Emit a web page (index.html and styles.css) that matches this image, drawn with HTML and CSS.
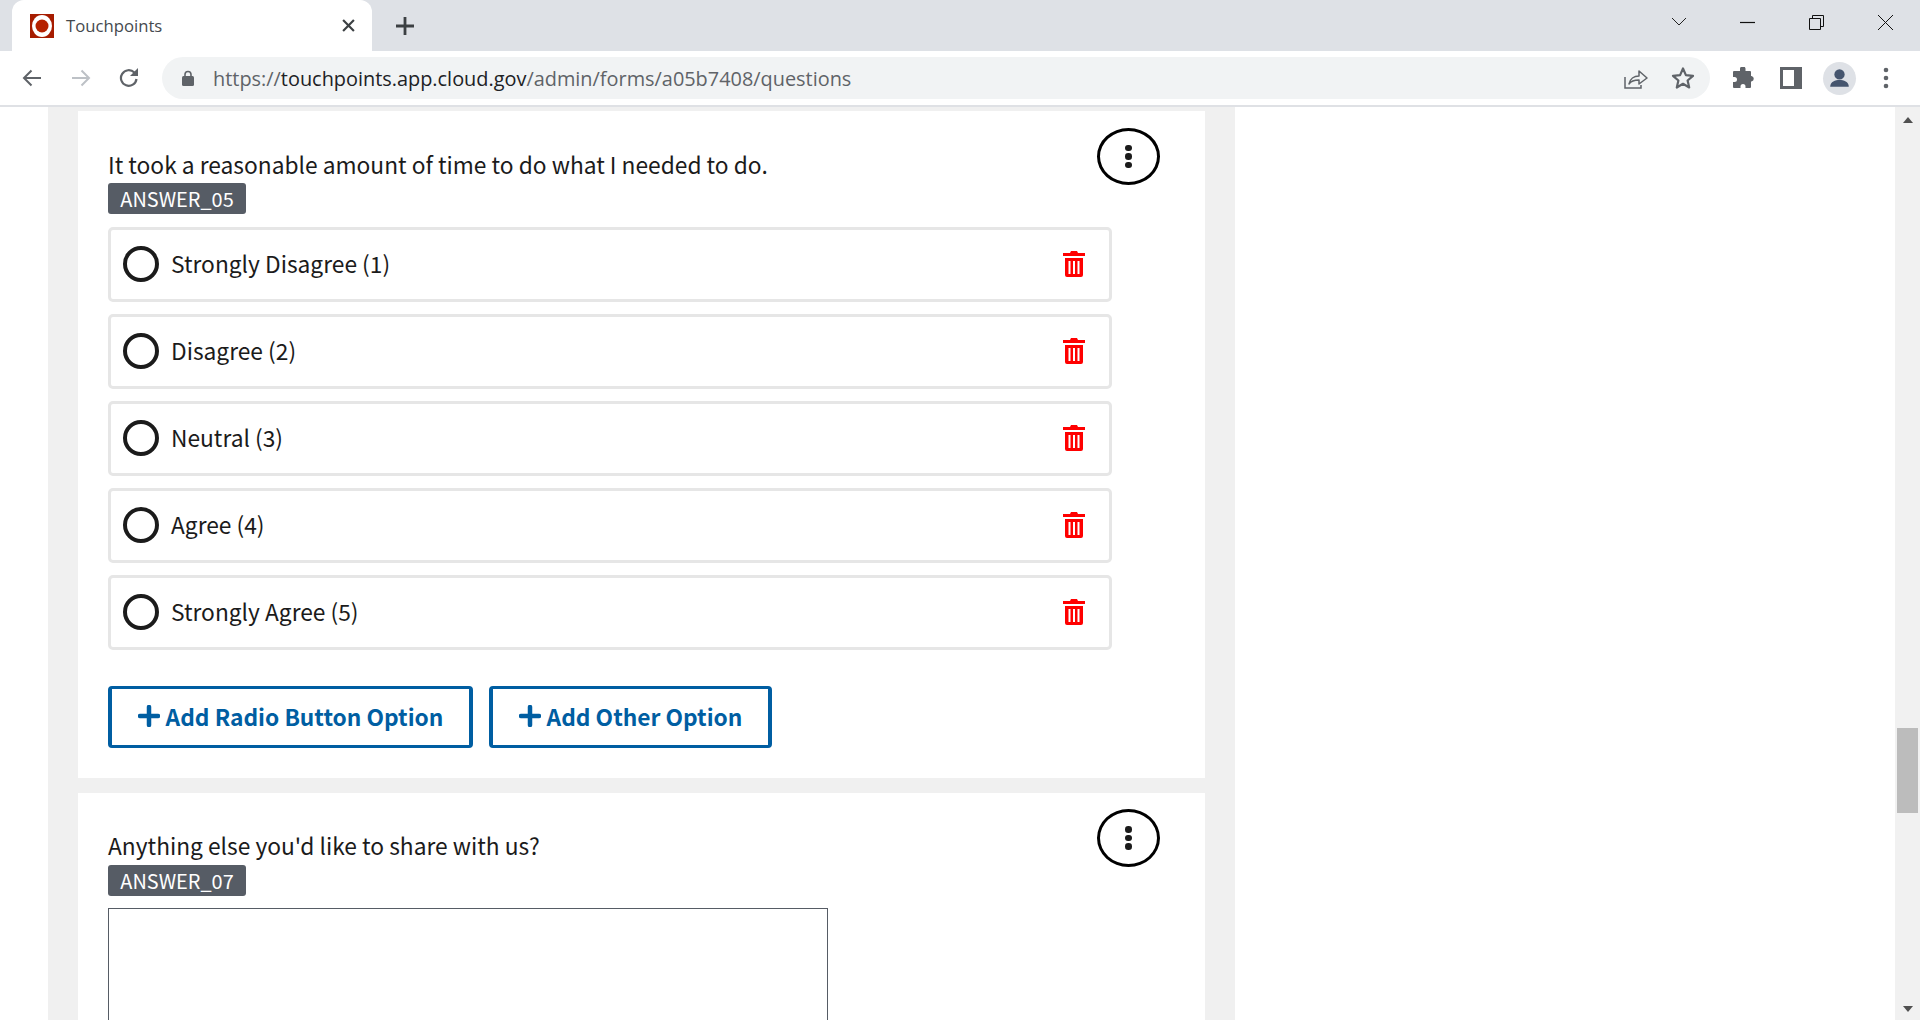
FILE: index.html
```html
<!DOCTYPE html>
<html lang="en">
<head>
<meta charset="utf-8">
<title>Touchpoints</title>
<link rel="stylesheet" href="styles.css">
</head>
<body>
<svg class="defs" width="0" height="0" aria-hidden="true">
  <symbol id="trash" viewBox="0 0 22 26">
    <path fill="#f00" d="M8 0h6l1 2h7v3H0V2h7z"/>
    <path fill="#f00" fill-rule="evenodd" d="M2 7h18v17a2 2 0 0 1-2 2H4a2 2 0 0 1-2-2zM5.500 10v13h2V10zM10 10v13h2V10zM14.500 10v13h2V10z"/>
  </symbol>
</svg>
<header class="chrome">
  <div class="tabstrip">
    <div class="tab">
      <svg class="favicon" viewBox="0 0 24 24"><rect width="24" height="24" fill="#a61c00"/><ellipse cx="12" cy="12" rx="10" ry="11" fill="#fff"/><circle cx="12" cy="12" r="6.500" fill="#b52100"/></svg>
      <span class="tab-title">Touchpoints</span>
      <svg class="tab-close" viewBox="0 0 12 12"><path d="M1 1l10 10M11 1L1 11" stroke="#3c4043" stroke-width="2"/></svg>
    </div>
    <svg class="new-tab" viewBox="0 0 18 18"><path d="M9 0v18M0 9h18" stroke="#3c4043" stroke-width="2.800"/></svg>
    <div class="window-controls">
      <svg class="win chevron" viewBox="0 0 16 10"><path d="M1 1l7 7 7-7" fill="none" stroke="#222" stroke-width="1"/></svg>
      <svg class="win minimize" viewBox="0 0 15 15"><path d="M0 7.500h15" stroke="#111" stroke-width="1.200"/></svg>
      <svg class="win restore" viewBox="0 0 15 15"><path d="M.5 3.500h11v11H.5zM3.500 3.500V.5h11v11h-3" fill="none" stroke="#111" stroke-width="1"/></svg>
      <svg class="win close" viewBox="0 0 15 15"><path d="M0 0l15 15M15 0L0 15" stroke="#111" stroke-width="1"/></svg>
    </div>
  </div>
  <div class="toolbar">
    <svg class="nav back" viewBox="0 0 20 18"><path d="M19 9H2M9.500 1.500L2 9l7.500 7.500" fill="none" stroke="#5f6368" stroke-width="2"/></svg>
    <svg class="nav forward" viewBox="0 0 20 18"><path d="M1 9h17M10.500 1.500L18 9l-7.500 7.500" fill="none" stroke="#bdc1c6" stroke-width="2"/></svg>
    <svg class="nav reload" viewBox="0 0 20 20"><path d="M17.500 11a7.800 7.800 0 1 1-2.200-6.500" fill="none" stroke="#5f6368" stroke-width="2.200"/><path d="M19 0v8h-8z" fill="#5f6368"/></svg>
    <div class="omnibox">
      <svg class="lock" viewBox="0 0 12 16"><path d="M3 7V4.500a3 3 0 0 1 6 0V7" fill="none" stroke="#5f6368" stroke-width="1.600"/><rect y="6" width="12" height="10" rx="1.500" fill="#5f6368"/></svg>
      <div class="url">https://<span class="host">touchpoints.app.cloud.gov</span>/admin/forms/a05b7408/questions</div>
      <svg class="omni-icon share" viewBox="0 0 24 21"><path d="M1 9v11h16v-3" fill="none" stroke="#5f6368" stroke-width="1.500"/><path d="M5 16c1-5 5-8 10-8V3l8 7-8 6v-4c-4 0-8 1-10 4z" fill="none" stroke="#5f6368" stroke-width="1.500" stroke-linejoin="round"/></svg>
      <svg class="omni-icon star" viewBox="0 0 24 24"><path d="M12 2.500l2.900 6.600 7.100.7-5.400 4.700 1.600 7-6.200-3.700-6.200 3.700 1.600-7L2 9.800l7.100-.7z" fill="none" stroke="#5f6368" stroke-width="2.200" stroke-linejoin="round"/></svg>
    </div>
    <svg class="tool puzzle" viewBox="0 0 22 22"><path fill="#5f6368" d="M8 1.500a2.800 2.800 0 0 1 5.500 0V4H18a1 1 0 0 1 1 1v4h.5a2.800 2.800 0 0 1 0 5.500H19V20a1 1 0 0 1-1 1h-4.500v-1.500a2.500 2.500 0 0 0-5 0V21H2a1 1 0 0 1-1-1v-5h1.500a2.500 2.500 0 0 0 0-5H1V5a1 1 0 0 1 1-1h6z"/></svg>
    <svg class="tool panel" viewBox="0 0 22 22"><path fill="#5f6368" fill-rule="evenodd" d="M0 0h22v22H0zM3 3v16h11V3z"/></svg>
    <div class="avatar"><svg viewBox="0 0 32 32"><circle cx="16" cy="12" r="5" fill="#45556e"/><path d="M7 24c0-5 5-6.500 9-6.500s9 1.500 9 6.500z" fill="#45556e"/></svg></div>
    <svg class="tool kebab-menu" viewBox="0 0 6 22"><circle cx="3" cy="3" r="2.300" fill="#5f6368"/><circle cx="3" cy="11" r="2.300" fill="#5f6368"/><circle cx="3" cy="19" r="2.300" fill="#5f6368"/></svg>
  </div>
</header>
<div class="viewport">
  <main class="page">
    <section class="card">
      <div class="question-head">
        <div class="question-text">
          <h2 class="question">It took a reasonable amount of time to do what I needed to do.</h2>
          <span class="badge">ANSWER_05</span>
        </div>
        <button class="menu-btn" type="button" aria-label="Menu"><i></i><i></i><i></i></button>
      </div>
      <ul class="options">
        <li class="option"><span class="radio"></span><span class="option-label">Strongly Disagree (1)</span><svg class="trash"><use href="#trash"/></svg></li>
        <li class="option"><span class="radio"></span><span class="option-label">Disagree (2)</span><svg class="trash"><use href="#trash"/></svg></li>
        <li class="option"><span class="radio"></span><span class="option-label">Neutral (3)</span><svg class="trash"><use href="#trash"/></svg></li>
        <li class="option"><span class="radio"></span><span class="option-label">Agree (4)</span><svg class="trash"><use href="#trash"/></svg></li>
        <li class="option"><span class="radio"></span><span class="option-label">Strongly Agree (5)</span><svg class="trash"><use href="#trash"/></svg></li>
      </ul>
      <div class="actions">
        <button class="add-btn add-radio" type="button"><svg class="plus" viewBox="0 0 22 22"><path d="M11 2v18M2 11h18" stroke="#005ea2" stroke-width="4.500" stroke-linecap="round"/></svg>Add Radio Button Option</button>
        <button class="add-btn add-other" type="button"><svg class="plus" viewBox="0 0 22 22"><path d="M11 2v18M2 11h18" stroke="#005ea2" stroke-width="4.500" stroke-linecap="round"/></svg>Add Other Option</button>
      </div>
    </section>
    <section class="card">
      <div class="question-head">
        <div class="question-text">
          <h2 class="question">Anything else you'd like to share with us?</h2>
          <span class="badge">ANSWER_07</span>
        </div>
        <button class="menu-btn" type="button" aria-label="Menu"><i></i><i></i><i></i></button>
      </div>
      <div class="textarea"></div>
    </section>
  </main>
  <div class="scrollbar">
    <span class="arrow up"></span>
    <div class="track"><div class="thumb"></div></div>
    <span class="arrow down"></span>
  </div>
</div>
</body>
</html>
```
FILE: styles.css
```css
* { box-sizing: border-box; }
html, body { margin: 0; height: 100%; }
body {
  display: flex;
  flex-direction: column;
  height: 1020px;
  overflow: hidden;
  background: #fff;
  color: #1b1b1b;
  font-family: "Noto Sans CJK SC", "Noto Sans", sans-serif;
}
.defs { position: absolute; }

/* browser chrome */
.chrome { flex: none; font-family: "Open Sans", "Noto Sans", sans-serif; }
.tabstrip { display: flex; align-items: center; height: 51px; background: #dee1e6; padding-left: 12px; }
.tab {
  display: flex; align-items: center; align-self: stretch;
  width: 360px; padding: 0 17px 0 18px;
  background: #fff; border-radius: 12px 12px 0 0;
}
.favicon { width: 24px; height: 24px; flex: none; }
.tab-title { margin-left: 12px; font-size: 16.700px; color: #45494e; flex: 1; }
.tab-close { width: 13px; height: 13px; flex: none; }
.new-tab { width: 18px; height: 18px; margin-left: 24px; flex: none; }
.window-controls { display: flex; align-items: center; margin-left: auto; height: 100%; padding-bottom: 7px; }
.win { flex: none; }
.chevron { width: 16px; height: 10px; margin-right: 53px; }
.minimize { width: 15px; height: 15px; margin-right: 54px; }
.restore { width: 15px; height: 15px; margin-right: 54px; }
.close { width: 15px; height: 15px; margin-right: 27px; }

.toolbar {
  display: flex; align-items: center;
  height: 56px; padding: 0 0 0 22px;
  background: #fff; border-bottom: 2px solid #dfe1e5;
}
.nav { flex: none; width: 20px; height: 20px; }
.forward { margin-left: 29px; }
.reload { margin-left: 28px; }
.omnibox {
  display: flex; align-items: center;
  width: 1548px; height: 42px; margin-left: 23px;
  padding: 0 15px 0 20px;
  background: #f1f3f4; border-radius: 21px;
}
.lock { width: 12px; height: 16px; flex: none; }
.url { margin-left: 19px; flex: 1; font-size: 19.900px; color: #5f6368; white-space: nowrap; }
.host { color: #202124; }
.omni-icon { flex: none; }
.share { width: 24px; height: 21px; margin-right: 23px; }
.star { width: 24px; height: 24px; }
.tool { flex: none; }
.puzzle { width: 22px; height: 22px; margin-left: 22px; }
.panel { width: 22px; height: 22px; margin-left: 26px; }
.avatar { width: 33px; height: 33px; margin-left: 21px; border-radius: 50%; background: #dee1e6; flex: none; }
.avatar svg { display: block; width: 100%; height: 100%; }
.kebab-menu { width: 6px; height: 22px; margin-left: 27px; }

/* page */
.viewport { flex: 1; min-height: 0; display: flex; overflow: hidden; }
.page {
  flex: none; align-self: flex-start;
  width: 1187px; margin-left: 48px;
  padding: 4px 30px 0;
  background: #f0f0f0;
  height: 913px; overflow: hidden;
}
.card { background: #fff; padding: 0 30px 30px; margin-bottom: 15px; }
.question-head { display: flex; justify-content: space-between; align-items: flex-start; }
.question-text { padding-top: 34px; }
.question { margin: 0; font-size: 22.750px; line-height: 38px; font-weight: 400; color: #1b1b1b; }
.card:first-child .question-text { padding-top: 36px; }
.card:first-child .question { line-height: 36px; }
.badge {
  display: block; width: 138px; height: 31px;
  background: #565c65; color: #fff; border-radius: 3px;
  font-size: 19.900px; line-height: 32px; text-align: center;
}
.menu-btn {
  flex: none; width: 63px; height: 57px; margin: 17px 15px 0 0;
  display: flex; flex-direction: column; align-items: center; justify-content: center; gap: 2px;
  padding: 0; background: #fff; border: 3px solid #000; border-radius: 50%;
}
.card + .card .menu-btn { height: 58px; margin-top: 16px; }
.menu-btn i { display: block; width: 6.500px; height: 6.500px; border-radius: 50%; background: #1b1b1b; }

.options { list-style: none; margin: 13px 0 0; padding: 0; width: 1004px; display: flex; flex-direction: column; gap: 12px; }
.option {
  display: flex; align-items: center; height: 75px;
  padding: 0 24px 1px 12px;
  border: 3px solid #e6e6e6; border-radius: 5px;
}
.radio { width: 36px; height: 36px; border: 4px solid #1b1b1b; border-radius: 50%; flex: none; }
.option-label { margin-left: 12px; padding-bottom: 2px; flex: 1; font-size: 22.750px; color: #1b1b1b; }
.trash { width: 22px; height: 26px; flex: none; }

.actions { display: flex; gap: 16px; margin-top: 36px; }
.add-btn {
  display: flex; align-items: center; justify-content: center;
  height: 62px; padding: 0 0 2px;
  background: #fff; border: solid #005ea2; border-width: 3px 4px; border-radius: 4px;
  color: #005ea2; font-family: inherit; font-size: 22.750px; font-weight: 700;
}
.add-radio { width: 365px; }
.add-other { width: 283px; }
.plus { width: 22px; height: 22px; margin-right: 6px; flex: none; }

.textarea { width: 720px; height: 300px; margin-top: 12px; border: 1px solid #565c65; background: #fff; }

/* scrollbar */
.scrollbar {
  flex: none; margin-left: auto; width: 25px;
  display: flex; flex-direction: column; align-items: center;
  background: #f1f1f1;
}
.arrow { flex: none; width: 0; height: 0; border-left: 5.500px solid transparent; border-right: 5.500px solid transparent; }
.arrow.up { margin-top: 10px; border-bottom: 6px solid #505050; }
.arrow.down { margin-bottom: 8px; border-top: 6px solid #505050; }
.track { flex: 1; align-self: stretch; padding-top: 605px; }
.thumb { width: 21px; height: 85px; margin: 0 auto; background: #bcbcbc; }
```
